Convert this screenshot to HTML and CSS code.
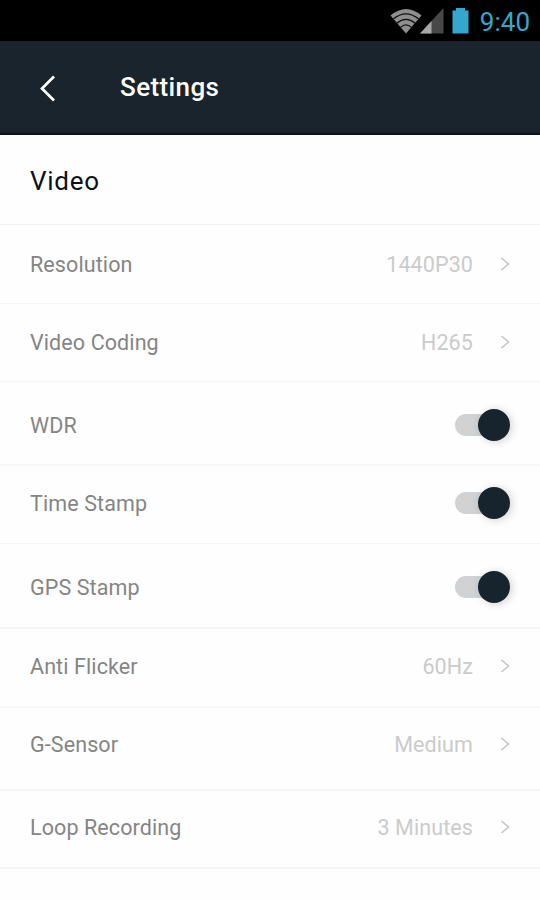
FILE: index.html
```html
<!DOCTYPE html>
<html lang="en">
<head>
    <meta charset="UTF-8">
    <meta name="viewport" content="width=device-width, initial-scale=1.0">
    <title>Settings</title>
    <link rel="stylesheet" href="styles.css">
</head>
<body>
    <!-- Status bar -->
    <div class="status-bar">
        <svg class="wifi" width="32" height="26" viewBox="0 0 32 26">
            <path d="M0.5 7.5Q16 -5.5 31.5 7.5L16 25.5Z" fill="#8f8f8f"/>
            <path d="M3 11.2Q16 0.5 29 11.2M6.8 15.3Q16 7.5 25.2 15.3M10.6 19.3Q16 14.5 21.4 19.3" fill="none" stroke="#111" stroke-width="1.2"/>
        </svg>
        <svg class="signal" width="24" height="26" viewBox="0 0 24 26">
            <path d="M23.5 0V25.5H0Z" fill="#484848"/>
            <path d="M11.5 13V25.5H0Z" fill="#a8a8a8"/>
        </svg>
        <svg class="battery" width="17" height="26" viewBox="0 0 17 26">
            <path d="M4 0H13V2.5H16.5V25.5H0.5V2.5H4Z" fill="#36a6cf"/>
        </svg>
        <span class="time">9:40</span>
    </div>

    <div class="header">
        <svg class="back" width="18" height="28" viewBox="0 0 18 28">
            <path d="M15 2.5L3 14.5L15 26.5" fill="none" stroke="#fff" stroke-width="2.7"/>
        </svg>
        <h1>Settings</h1>
    </div>

    <!-- Video settings -->
    <div class="settings">
        <h2>Video</h2>
        <div class="row resolution">
            <span class="label">Resolution</span>
            <span class="value">1440P30</span>
            <svg class="arrow" viewBox="0 0 10 16"><path d="M1.5 2L8.5 8L1.5 14"/></svg>
        </div>
        <div class="row coding">
            <span class="label">Video Coding</span>
            <span class="value">H265</span>
            <svg class="arrow" viewBox="0 0 10 16"><path d="M1.5 2L8.5 8L1.5 14"/></svg>
        </div>
        <div class="row wdr">
            <span class="label">WDR</span>
            <span class="switch"><span class="knob"></span></span>
        </div>
        <div class="row time-stamp">
            <span class="label">Time Stamp</span>
            <span class="switch"><span class="knob"></span></span>
        </div>
        <div class="row gps-stamp">
            <span class="label">GPS Stamp</span>
            <span class="switch"><span class="knob"></span></span>
        </div>
        <div class="row flicker">
            <span class="label">Anti Flicker</span>
            <span class="value">60Hz</span>
            <svg class="arrow" viewBox="0 0 10 16"><path d="M1.5 2L8.5 8L1.5 14"/></svg>
        </div>
        <div class="row sensor">
            <span class="label">G-Sensor</span>
            <span class="value">Medium</span>
            <svg class="arrow" viewBox="0 0 10 16"><path d="M1.5 2L8.5 8L1.5 14"/></svg>
        </div>
        <div class="row loop">
            <span class="label">Loop Recording</span>
            <span class="value">3 Minutes</span>
            <svg class="arrow" viewBox="0 0 10 16"><path d="M1.5 2L8.5 8L1.5 14"/></svg>
        </div>
    </div>
</body>
</html>
```
FILE: styles.css
```css
* {
    box-sizing: border-box;
}
body {
    margin: 0;
    background: #fefefe;
    font-family: Roboto, sans-serif;
}
.status-bar {
    display: flex;
    align-items: center;
    justify-content: flex-end;
    height: 41px;
    padding-right: 10px;
    background: #000;
}
.signal {
    margin-left: -2px;
}
.battery {
    margin-left: 8px;
}
.time {
    margin-left: 11px;
    padding-top: 2px;
    color: #36a6cf;
    font-size: 26px;
    line-height: 28px;
}
.header {
    display: flex;
    align-items: center;
    height: 94px;
    padding-left: 39px;
    background: #19242d;
    border-bottom: 2px solid #0c151d;
}
.back {
    margin-top: 1px;
}
.header h1 {
    margin: 0 0 0 63px;
    color: #fff;
    font-size: 26px;
    font-weight: 500;
    line-height: 30px;
    letter-spacing: 0.4px;
}
.settings h2 {
    height: 90px;
    margin: 0;
    padding: 31px 30px 0;
    border-bottom: 1px solid #f3f3f3;
    color: #0d1218;
    font-size: 26px;
    font-weight: 400;
    line-height: 30px;
    letter-spacing: 0.7px;
}
.row {
    display: flex;
    align-items: center;
    padding: 24px 30px 26px;
    border-bottom: 2px solid #f6f6f6;
    font-size: 21.5px;
    line-height: 26px;
    letter-spacing: 0.1px;
}
.label,
.value {
    padding-top: 2px;
}
.label {
    flex: 1;
    color: #858585;
}
.value {
    color: #cbcbcb;
}
.arrow {
    width: 10px;
    height: 16px;
    margin-left: 27px;
    fill: none;
    stroke: #c4c4c4;
    stroke-width: 1.5;
}

/* row spacing */
.resolution {
    padding-top: 25px;
    padding-bottom: 25px;
    border-bottom-width: 1px;
}
.coding {
    padding-bottom: 25px;
    border-bottom-width: 1px;
}
.wdr {
    padding-top: 29px;
    padding-bottom: 25px;
}
.time-stamp {
    padding-top: 23px;
    border-bottom-width: 1px;
}
.gps-stamp {
    padding-top: 29px;
}
.flicker {
    padding-top: 23px;
}
.sensor {
    padding-top: 22px;
    padding-bottom: 31px;
}
.loop {
    padding-top: 22px;
}

.switch {
    position: relative;
    width: 55px;
    height: 22px;
    border-radius: 11px;
    background: linear-gradient(to right, #d0d2d4 40px, transparent 40px);
}
.knob {
    position: absolute;
    top: -5px;
    right: 0;
    width: 32px;
    height: 32px;
    border-radius: 50%;
    background: #17242e;
    box-shadow: 2px 1px 8px rgba(0,0,0,0.18);
}
```
